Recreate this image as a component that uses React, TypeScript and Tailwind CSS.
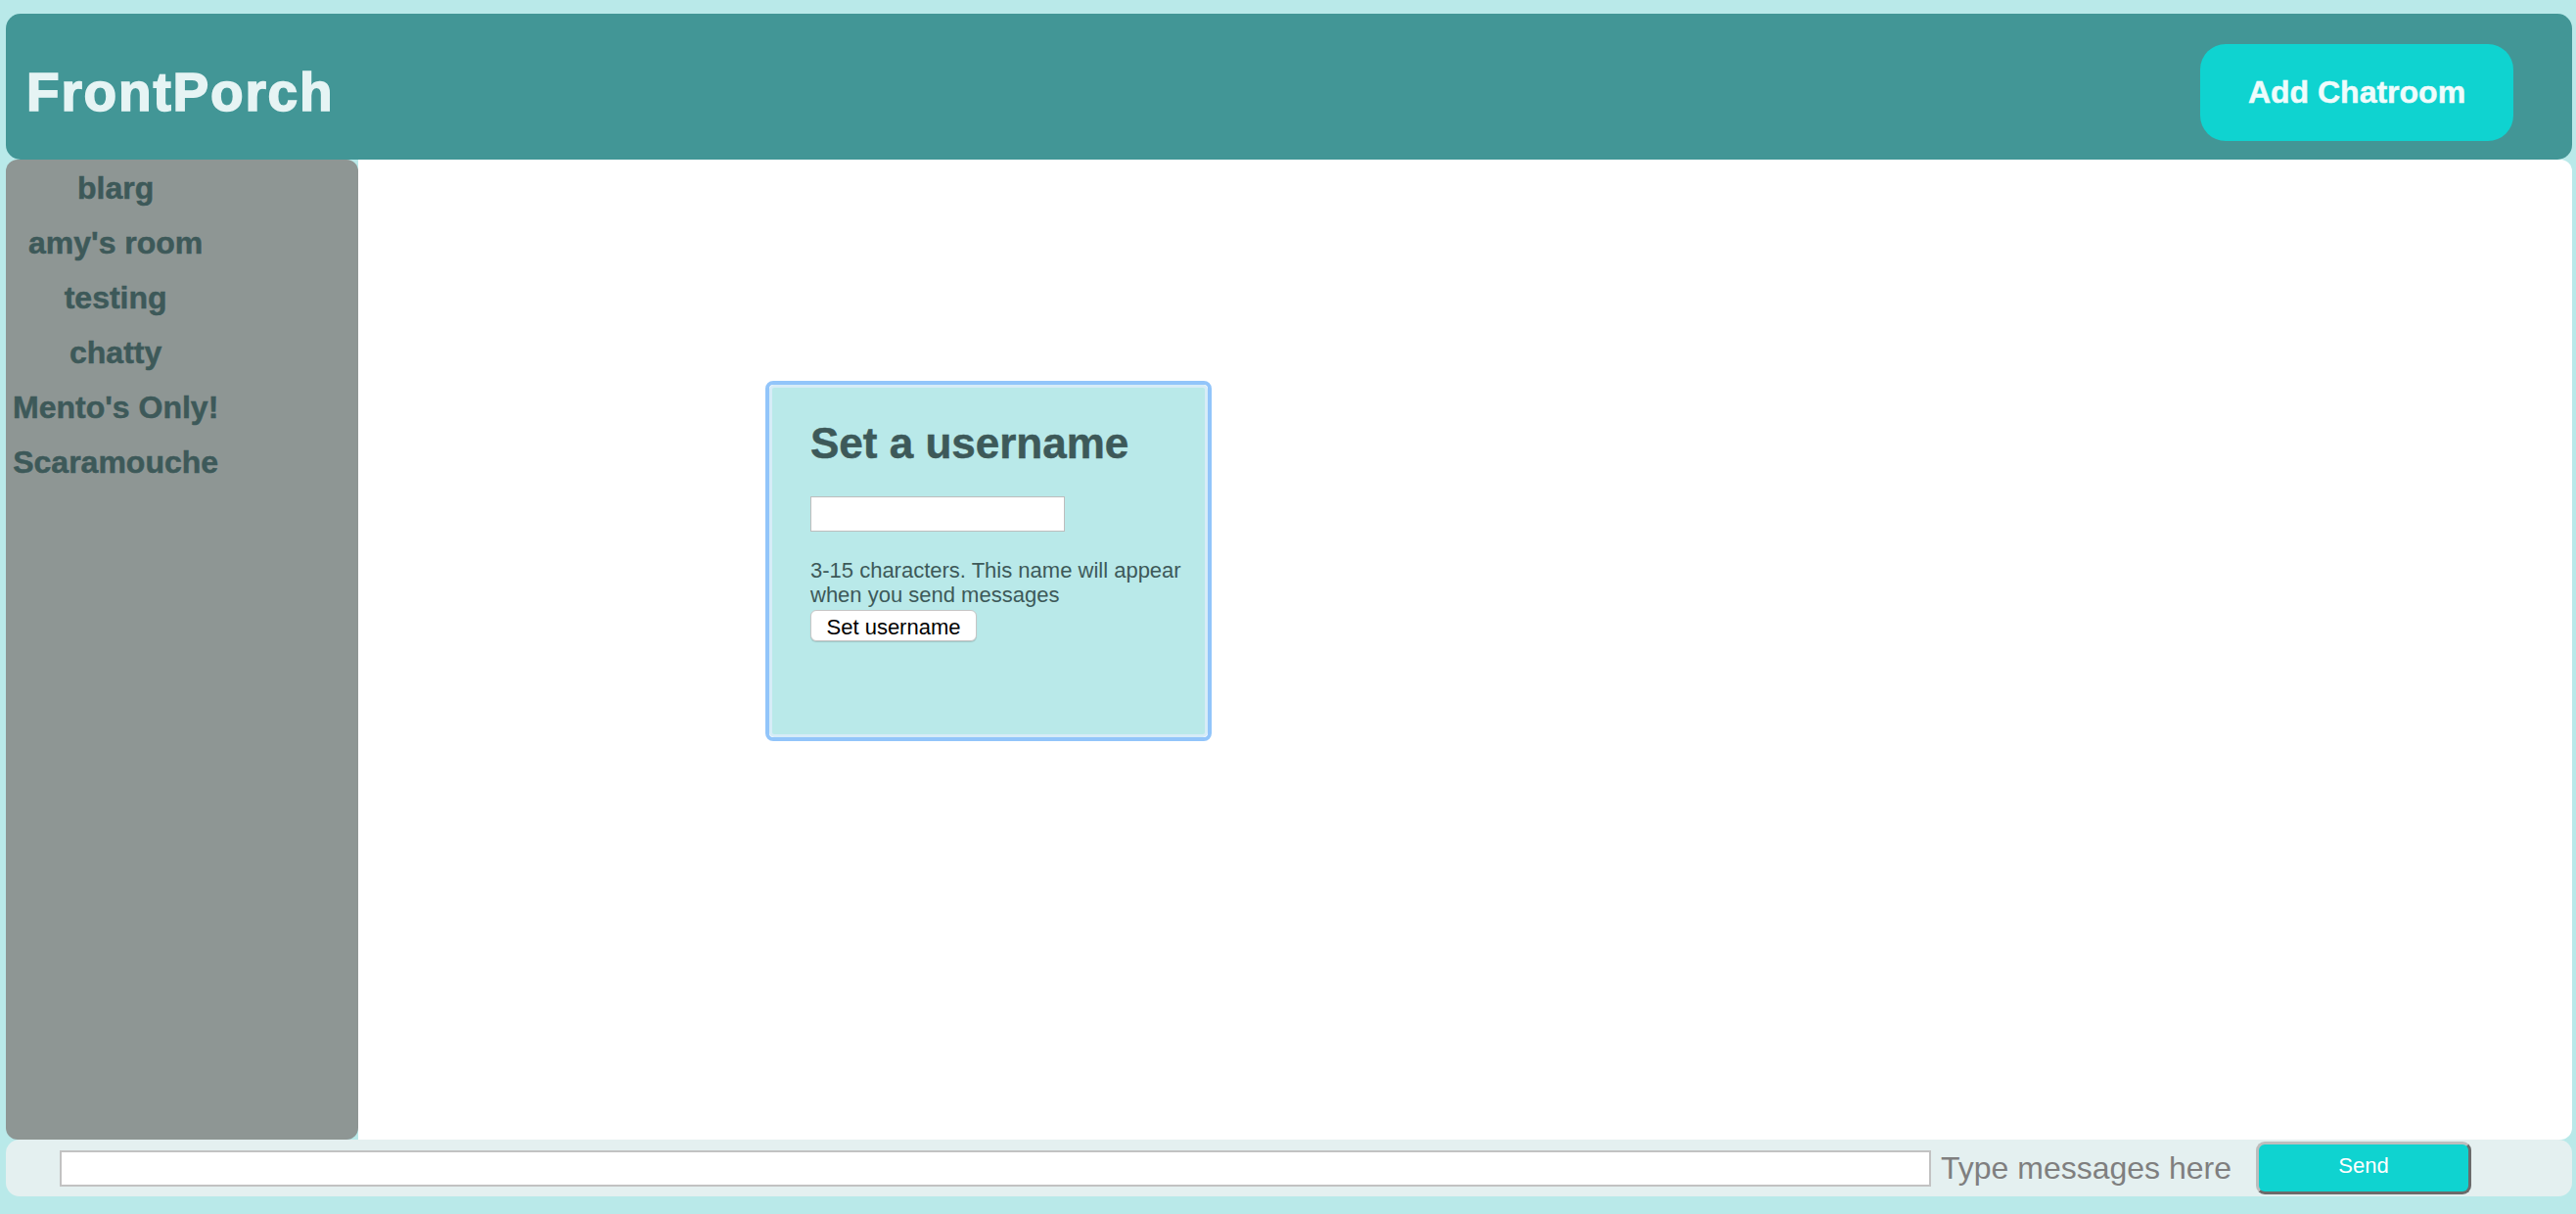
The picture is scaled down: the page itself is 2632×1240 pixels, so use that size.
import { useState } from "react";

const rooms = ["blarg", "amy's room", "testing", "chatty", "Mento's Only!", "Scaramouche"];

export default function App() {
	const [username, setUsername] = useState("");
	const [message, setMessage] = useState("");

	return (
		<div className="h-[1240px] flex flex-col bg-[#b9e9e9] pt-[14px] pl-[6px] pr-[4px] pb-[18px] font-['Liberation_Sans',Arial,sans-serif]">
			<header className="h-[149px] shrink-0 flex items-center justify-between bg-[#429696] rounded-[15px] pl-[21px] pr-[60px] pt-[11px]">
				<h1 className="text-[55px] font-bold tracking-[1.8px] text-[#e6f4f4] [-webkit-text-stroke:1.6px_#e6f4f4]">FrontPorch</h1>
				<button className="w-[320px] h-[99px] rounded-[26px] bg-[#0fd3d0] text-[32px] font-bold text-[#effcfc] [-webkit-text-stroke:0.5px_#effcfc]">
					Add Chatroom
				</button>
			</header>

			<div className="flex flex-1 min-h-0">
				<aside className="w-[360px] shrink-0 bg-[#8e9694] rounded-[12px] pl-[7px] pt-[1px]">
					<ul className="inline-flex flex-col items-center">
						{rooms.map((room) => (
							<li key={room} className="text-[32px] leading-[56px] font-bold text-[#3d5959] [-webkit-text-stroke:0.5px_#3d5959]">
								{room}
							</li>
						))}
					</ul>
				</aside>

				<main className="relative flex-1 bg-white rounded-r-[12px]">
					<div className="absolute left-[416px] top-[226px] w-[456px] h-[368px] rounded-[8px] border-[4px] border-[#92c5fa]">
						<div className="h-full rounded-[5px] border-[3px] border-[#d6ecf7] bg-[#b9e9e9] pl-[39px] pt-[32px]">
							<h2 className="text-[44px] leading-[50px] font-bold text-[#3d5959] [-webkit-text-stroke:0.5px_#3d5959]">Set a username</h2>
							<input
								value={username}
								onChange={(e) => setUsername(e.target.value)}
								className="mt-[29px] block w-[260px] h-[36px] bg-white border border-[#bdbdbd] outline-none"
							/>
							<p className="mt-[27px] w-[399px] text-[22px] leading-[25px] text-[#3d5959]">
								3-15 characters. This name will appear when you send messages
							</p>
							<button className="mt-[3px] w-[170px] h-[32px] rounded-[6px] bg-white border border-[#c6c6c6] shadow-[0_1px_1px_rgba(0,0,0,0.15)] text-[22px] text-black">
								Set username
							</button>
						</div>
					</div>
				</main>
			</div>

			<footer className="h-[58px] shrink-0 flex items-center bg-[#e4f0f0] rounded-[14px] pl-[55px] pr-[103px]">
				<input
					value={message}
					onChange={(e) => setMessage(e.target.value)}
					className="flex-1 h-[37px] bg-white border-2 border-[#c2c2c2] outline-none"
				/>
				<span className="ml-[10px] text-[32px] text-[#7f7f7f]">Type messages here</span>
				<button className="ml-[25px] w-[220px] h-[54px] rounded-[9px] bg-[#0fd3d0] border-[3px] border-t-[#bdbdbd] border-l-[#bdbdbd] border-r-[#6b6b6b] border-b-[#6b6b6b] text-[22px] text-white pb-[6px]">
					Send
				</button>
			</footer>
		</div>
	);
}
